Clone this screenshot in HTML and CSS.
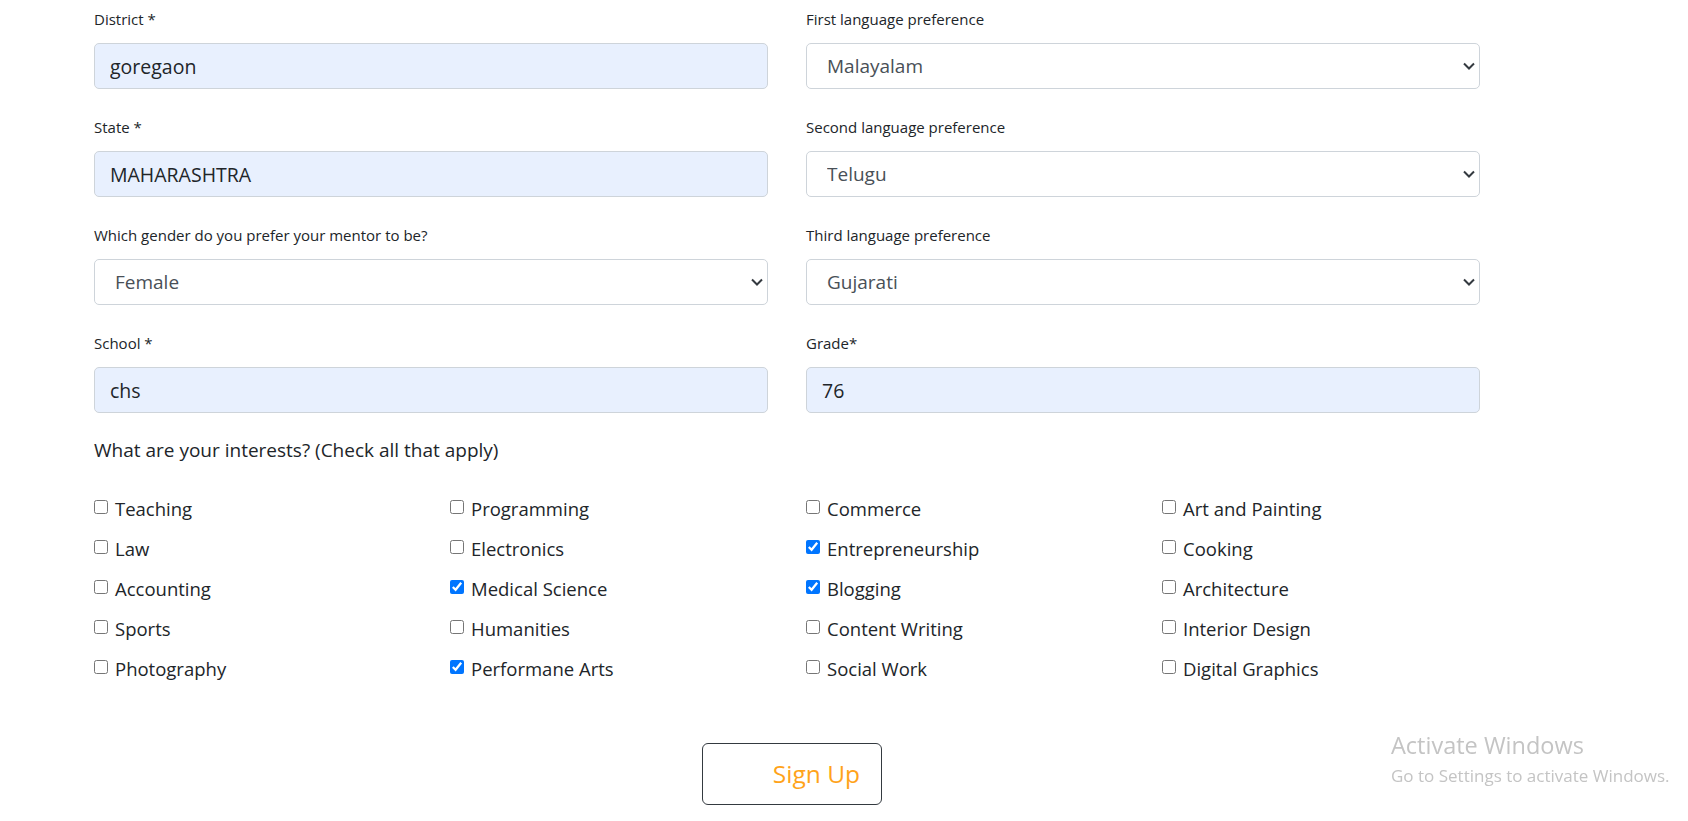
FILE: index.html
```html
<!DOCTYPE html>
<html lang="en">

<head>
  <meta charset="UTF-8" />
  <meta name="viewport" content="width=device-width, initial-scale=1.0" />
  <title>Mentee Sign Up</title>
  <link rel="stylesheet" href="styles.css">
</head>

<body>
  <form class="signup">
    <div class="fields">
      <div class="field">
        <label class="label" for="district">District *</label>
        <input class="input autofill" id="district" type="text" value="goregaon">
      </div>
      <div class="field">
        <label class="label" for="lang1">First language preference</label>
        <div class="select-wrap">
          <select class="input select" id="lang1">
            <option>Malayalam</option>
          </select>
          <svg class="chevron" viewBox="0 0 12 8"><path d="M1 1.5l5 5 5-5" /></svg>
        </div>
      </div>

      <div class="field">
        <label class="label" for="state">State *</label>
        <input class="input autofill" id="state" type="text" value="MAHARASHTRA">
      </div>
      <div class="field">
        <label class="label" for="lang2">Second language preference</label>
        <div class="select-wrap">
          <select class="input select" id="lang2">
            <option>Telugu</option>
          </select>
          <svg class="chevron" viewBox="0 0 12 8"><path d="M1 1.5l5 5 5-5" /></svg>
        </div>
      </div>

      <div class="field">
        <label class="label" for="gender">Which gender do you prefer your mentor to be?</label>
        <div class="select-wrap">
          <select class="input select" id="gender">
            <option>Female</option>
          </select>
          <svg class="chevron" viewBox="0 0 12 8"><path d="M1 1.5l5 5 5-5" /></svg>
        </div>
      </div>
      <div class="field">
        <label class="label" for="lang3">Third language preference</label>
        <div class="select-wrap">
          <select class="input select" id="lang3">
            <option>Gujarati</option>
          </select>
          <svg class="chevron" viewBox="0 0 12 8"><path d="M1 1.5l5 5 5-5" /></svg>
        </div>
      </div>

      <div class="field">
        <label class="label" for="school">School *</label>
        <input class="input autofill" id="school" type="text" value="chs">
      </div>
      <div class="field">
        <label class="label" for="grade">Grade*</label>
        <input class="input autofill" id="grade" type="text" value="76">
      </div>
    </div>

    <p class="question">What are your interests? (Check all that apply)</p>

    <div class="interests" id="interests"></div>

    <div class="actions">
      <button class="btn-signup" type="button">Sign Up</button>
    </div>
  </form>

  <div class="activate">
    <div class="activate-title">Activate Windows</div>
    <div class="activate-sub">Go to Settings to activate Windows.</div>
  </div>

  <script>
    // 按行排列的兴趣列表，true 表示已勾选
    const interests = [
      ['Teaching', false], ['Programming', false], ['Commerce', false], ['Art and Painting', false],
      ['Law', false], ['Electronics', false], ['Entrepreneurship', true], ['Cooking', false],
      ['Accounting', false], ['Medical Science', true], ['Blogging', true], ['Architecture', false],
      ['Sports', false], ['Humanities', false], ['Content Writing', false], ['Interior Design', false],
      ['Photography', false], ['Performane Arts', true], ['Social Work', false], ['Digital Graphics', false]
    ];

    const $interests = document.getElementById('interests');
    const $fragment = document.createDocumentFragment();

    for (const [name, checked] of interests) {
      const $label = document.createElement('label');
      $label.className = 'check';

      const $box = document.createElement('input');
      $box.type = 'checkbox';
      $box.className = 'check-box';
      $box.checked = checked;

      $label.appendChild($box);
      $label.appendChild(document.createTextNode(name));
      $fragment.appendChild($label);
    }
    $interests.appendChild($fragment);
  </script>
</body>

</html>
```

FILE: styles.css
```css
* {
  box-sizing: border-box;
}

body {
  margin: 0;
  background-color: #fff;
  color: #212529;
  font-family: "Open Sans", "Noto Sans", sans-serif;
}

.signup {
  width: 1424px;
  margin-left: 94px;
  padding-top: 9px;
}

.fields {
  display: grid;
  grid-template-columns: 674px 674px;
  column-gap: 38px;
  row-gap: 28px;
}

.label {
  display: block;
  margin-bottom: 14px;
  font-size: 15px;
  line-height: 20px;
  color: #212529;
}

.input {
  display: block;
  width: 100%;
  height: 46px;
  padding: 0 15px;
  border: 1px solid #ced4da;
  border-radius: 5px;
  background-color: #fff;
  color: #212529;
  font-family: inherit;
  font-size: 19.5px;
  outline: none;
}

.autofill {
  background-color: #e8f0fe;
}

.select-wrap {
  position: relative;
}

.select {
  padding-left: 20px;
  font-size: 19px;
  color: #495057;
  -webkit-appearance: none;
  appearance: none;
}

.chevron {
  position: absolute;
  right: 5px;
  top: 19px;
  width: 12px;
  height: 8px;
  fill: none;
  stroke: #343a40;
  stroke-width: 2;
  pointer-events: none;
}

.question {
  margin: 23px 0 0;
  font-size: 19px;
  line-height: 28px;
}

.interests {
  display: grid;
  grid-template-columns: repeat(4, 1fr);
  margin-top: 24px;
}

.check {
  display: flex;
  align-items: center;
  height: 40px;
  font-size: 18.5px;
}

.check-box {
  width: 14px;
  height: 14px;
  margin: -3px 7px 0 0;
}

.actions {
  display: flex;
  margin-top: 55px;
  padding-left: 608px;
}

.btn-signup {
  width: 180px;
  height: 62px;
  padding: 0 21px 2px 0;
  border: 1px solid #343a40;
  border-radius: 6px;
  background-color: #fff;
  color: #ffa31a;
  font-family: inherit;
  font-size: 24.5px;
  text-align: right;
  cursor: pointer;
}

.activate {
  position: fixed;
  left: 1391px;
  top: 730px;
  color: #c4c4c4;
  pointer-events: none;
}

.activate-title {
  font-size: 23.5px;
  line-height: 30px;
}

.activate-sub {
  margin-top: 5px;
  font-size: 17px;
  line-height: 22px;
}
```
